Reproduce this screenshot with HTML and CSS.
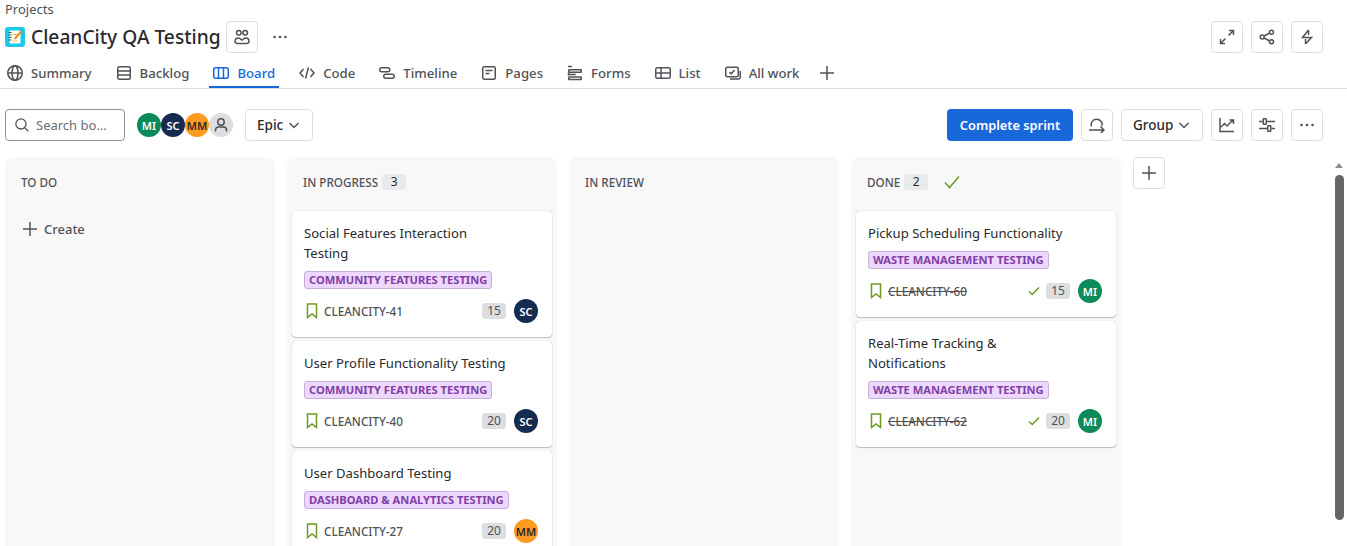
FILE: index.html
```html
<!DOCTYPE html>
<html lang="en">
<head>
    <meta charset="UTF-8">
    <meta name="viewport" content="width=device-width, initial-scale=1.0">
    <title>CleanCity QA Testing - Board</title>
    <link rel="stylesheet" href="styles.css">
</head>
<body>
    <header class="head">
        <div class="crumb">Projects</div>
        <div class="title-row">
            <svg class="logo" viewBox="0 0 20 20" width="20" height="20">
                <rect width="20" height="20" rx="3" fill="#1cc8e8"/>
                <rect x="4.5" y="3.5" width="11" height="13" rx="1" fill="#fdfdf6"/>
                <path d="M3.5 5.5h3M3.5 8h3M3.5 10.500h3M3.5 13h3" stroke="#555" stroke-width="1"/>
                <path d="M7.500 7.500h5M7.500 14h5" stroke="#f3c26a" stroke-width="1"/>
                <path d="M9 13l1-3 5.500-6.500 1.500 1.500-5.500 6.500z" fill="#f08a24"/>
            </svg>
            <h1>CleanCity QA Testing</h1>
            <button class="btn icon">
                <svg viewBox="0 0 16 16" width="16" height="16" class="ico"><circle cx="4.800" cy="3.800" r="2.300"/><circle cx="11.200" cy="3.800" r="2.300"/><path d="M1 12.500c0-2 1.300-3.500 3.300-3.500 2.500 0 2.500 2 3.700 2s1.500-2 3.700-2c2 0 3.300 1.500 3.300 3.500s-1.300 2-3 2H4c-1.700 0-3-.3-3-2z"/></svg>
            </button>
            <span class="dots">
                <svg viewBox="0 0 16 16" width="16" height="16"><circle cx="2.500" cy="8" r="1.300"/><circle cx="8" cy="8" r="1.300"/><circle cx="13.500" cy="8" r="1.300"/></svg>
            </span>
            <div class="head-actions">
                <button class="btn icon">
                    <svg viewBox="0 0 16 16" width="16" height="16" class="ico"><path d="M9.500 6.500L14.500 1.500M10 1.500h4.500V6M6.500 9.500L1.500 14.500M1.500 10v4.500H6"/></svg>
                </button>
                <button class="btn icon">
                    <svg viewBox="0 0 16 16" width="16" height="16" class="ico"><circle cx="3.200" cy="8" r="2"/><circle cx="12.500" cy="3.200" r="2"/><circle cx="12.500" cy="12.800" r="2"/><path d="M5 7l5.800-3M5 9l5.800 3"/></svg>
                </button>
                <button class="btn icon">
                    <svg viewBox="0 0 16 16" width="16" height="16" class="ico"><path d="M9.500 1L3.500 8.500h9L6.500 15M9.500 1v5M6.500 15v-5"/></svg>
                </button>
            </div>
        </div>
        <nav class="tabs">
            <a class="tab">
                <svg viewBox="0 0 16 16" width="16" height="16" class="ico"><circle cx="8" cy="8" r="7.250"/><ellipse cx="8" cy="8" rx="3" ry="7.250"/><path d="M1 8h14"/></svg>
                Summary
            </a>
            <a class="tab">
                <svg viewBox="0 0 16 16" width="16" height="16" class="ico"><rect x="1.750" y="1.750" width="12.500" height="12.500" rx="1.500"/><path d="M2 6h12M2 10h12"/></svg>
                Backlog
            </a>
            <a class="tab active">
                <svg viewBox="0 0 16 16" width="16" height="16" class="ico"><rect x="0.750" y="2.750" width="14.500" height="10.500" rx="2"/><path d="M5.500 3v10M10.500 3v10"/></svg>
                Board
            </a>
            <a class="tab">
                <svg viewBox="0 0 16 16" width="16" height="16" class="ico"><path d="M4.500 4L1 8l3.500 4M11.500 4L15 8l-3.500 4M9.500 2.500l-3 11"/></svg>
                Code
            </a>
            <a class="tab">
                <svg viewBox="0 0 16 16" width="16" height="16" class="ico"><rect x="0.750" y="2.750" width="10" height="4" rx="2"/><rect x="4.750" y="9.250" width="10.500" height="4" rx="2"/></svg>
                Timeline
            </a>
            <a class="tab">
                <svg viewBox="0 0 16 16" width="16" height="16" class="ico"><rect x="1.750" y="1.750" width="12.500" height="12.500" rx="1.500"/><path d="M4.500 5.500h7M4.500 8.500h4"/></svg>
                Pages
            </a>
            <a class="tab">
                <svg viewBox="0 0 16 16" width="16" height="16" class="ico"><path d="M1 1.500h4"/><rect x="1.750" y="4.750" width="12.500" height="2.500" rx=".5"/><path d="M1.500 7.500v3"/><rect x="1.750" y="12" width="12.500" height="2.500" rx=".5"/><path d="M1.750 9.500h7"/></svg>
                Forms
            </a>
            <a class="tab">
                <svg viewBox="0 0 16 16" width="16" height="16" class="ico"><rect x="0.750" y="2.750" width="14.500" height="10.500" rx="1.500"/><path d="M1 8h14M6 3v10"/></svg>
                List
            </a>
            <a class="tab">
                <svg viewBox="0 0 16 16" width="16" height="16" class="ico"><rect x="0.750" y="2.250" width="12.500" height="9.500" rx="1.500"/><path d="M4.500 7l1.800 1.800L9.500 5M15.250 6v6.500a1.500 1.500 0 0 1-1.500 1.500H5"/></svg>
                All work
            </a>
            <a class="tab plain">
                <svg viewBox="0 0 16 16" width="16" height="16" class="ico"><path d="M8 1v14M1 8h14"/></svg>
            </a>
        </nav>
    </header>

    <section class="toolbar">
        <label class="search">
            <svg viewBox="0 0 16 16" width="14" height="14" class="ico"><circle cx="6.800" cy="6.800" r="5.800"/><path d="M11 11l4.200 4.200"/></svg>
            <span>Search bo...</span>
        </label>
        <div class="people">
            <span class="avatar mi">MI</span>
            <span class="avatar sc">SC</span>
            <span class="avatar mm">MM</span>
            <span class="avatar none">
                <svg viewBox="0 0 16 16" width="16" height="16" class="ico"><circle cx="8" cy="5" r="3.200"/><path d="M2.500 14.500v-1.500a3 3 0 0 1 3-3h5a3 3 0 0 1 3 3v1.500"/></svg>
            </span>
        </div>
        <button class="btn text">Epic
            <svg viewBox="0 0 16 16" width="16" height="16" class="ico"><path d="M3.500 6l4.500 4.500L12.500 6"/></svg>
        </button>
        <div class="tool-actions">
            <button class="btn primary">Complete sprint</button>
            <button class="btn icon">
                <svg viewBox="0 0 16 16" width="16" height="16" class="ico"><path d="M2.500 9.500A5.500 5.500 0 1 1 13 9M0 13h15M11.500 9.500L15 13l-3.500 3.500"/></svg>
            </button>
            <button class="btn text group">Group
                <svg viewBox="0 0 16 16" width="16" height="16" class="ico"><path d="M3.500 6l4.500 4.500L12.500 6"/></svg>
            </button>
            <button class="btn icon">
                <svg viewBox="0 0 16 16" width="16" height="16" class="ico"><path d="M1 1v13.500h14M2 10l3.500-3.500 2.500 2.500 6-6M10.500 3h4v4"/></svg>
            </button>
            <button class="btn icon">
                <svg viewBox="0 0 16 16" width="16" height="16" class="ico"><path d="M0 4.500h3.500M8 4.500h8M0 11.500h8M12.500 11.500H16"/><rect x="4.250" y="1.750" width="3" height="5.500" rx=".5"/><rect x="8.750" y="8.750" width="3" height="5.500" rx=".5"/></svg>
            </button>
            <button class="btn icon">
                <svg viewBox="0 0 16 16" width="16" height="16" class="fill"><circle cx="2.500" cy="8" r="1.300"/><circle cx="8" cy="8" r="1.300"/><circle cx="13.500" cy="8" r="1.300"/></svg>
            </button>
        </div>
    </section>

    <main class="board">
        <section class="column">
            <div class="col-head"><span class="col-name">TO DO</span></div>
            <div class="create">
                <svg viewBox="0 0 16 16" width="16" height="16" class="ico"><path d="M8 1v14M1 8h14"/></svg>
                Create
            </div>
        </section>

        <section class="column">
            <div class="col-head"><span class="col-name">IN PROGRESS</span><span class="count">3</span></div>
            <div class="cards">
                <article class="card">
                    <h2>Social Features Interaction<br>Testing</h2>
                    <span class="tag">COMMUNITY FEATURES TESTING</span>
                    <div class="card-foot">
                        <svg viewBox="0 0 12 16" width="12" height="16" class="mark"><path d="M1.500 1h9v13.500L6 11 1.500 14.500z"/></svg>
                        <span class="key">CLEANCITY-41</span>
                        <span class="points">15</span>
                        <span class="avatar sc">SC</span>
                    </div>
                </article>
                <article class="card">
                    <h2>User Profile Functionality Testing</h2>
                    <span class="tag">COMMUNITY FEATURES TESTING</span>
                    <div class="card-foot">
                        <svg viewBox="0 0 12 16" width="12" height="16" class="mark"><path d="M1.500 1h9v13.500L6 11 1.500 14.500z"/></svg>
                        <span class="key">CLEANCITY-40</span>
                        <span class="points">20</span>
                        <span class="avatar sc">SC</span>
                    </div>
                </article>
                <article class="card">
                    <h2>User Dashboard Testing</h2>
                    <span class="tag">DASHBOARD &amp; ANALYTICS TESTING</span>
                    <div class="card-foot">
                        <svg viewBox="0 0 12 16" width="12" height="16" class="mark"><path d="M1.500 1h9v13.500L6 11 1.500 14.500z"/></svg>
                        <span class="key">CLEANCITY-27</span>
                        <span class="points">20</span>
                        <span class="avatar mm">MM</span>
                    </div>
                </article>
            </div>
        </section>

        <section class="column">
            <div class="col-head"><span class="col-name">IN REVIEW</span></div>
        </section>

        <section class="column">
            <div class="col-head">
                <span class="col-name">DONE</span><span class="count">2</span>
                <svg viewBox="0 0 16 16" width="16" height="16" class="done-check"><path d="M1 8.500l4.500 5L15 2.500"/></svg>
            </div>
            <div class="cards">
                <article class="card">
                    <h2>Pickup Scheduling Functionality</h2>
                    <span class="tag">WASTE MANAGEMENT TESTING</span>
                    <div class="card-foot">
                        <svg viewBox="0 0 12 16" width="12" height="16" class="mark"><path d="M1.500 1h9v13.500L6 11 1.500 14.500z"/></svg>
                        <span class="key struck">CLEANCITY-60</span>
                        <svg viewBox="0 0 12 12" width="12" height="12" class="small-check"><path d="M1 6.500l3.300 3L11 2.500"/></svg>
                        <span class="points">15</span>
                        <span class="avatar mi">MI</span>
                    </div>
                </article>
                <article class="card">
                    <h2>Real-Time Tracking &amp;<br>Notifications</h2>
                    <span class="tag">WASTE MANAGEMENT TESTING</span>
                    <div class="card-foot">
                        <svg viewBox="0 0 12 16" width="12" height="16" class="mark"><path d="M1.500 1h9v13.500L6 11 1.500 14.500z"/></svg>
                        <span class="key struck">CLEANCITY-62</span>
                        <svg viewBox="0 0 12 12" width="12" height="12" class="small-check"><path d="M1 6.500l3.300 3L11 2.500"/></svg>
                        <span class="points">20</span>
                        <span class="avatar mi">MI</span>
                    </div>
                </article>
            </div>
        </section>

        <button class="btn icon add-col">
            <svg viewBox="0 0 16 16" width="16" height="16" class="ico"><path d="M8 1v14M1 8h14"/></svg>
        </button>

        <div class="scroll">
            <span class="scroll-up"></span>
            <span class="scroll-thumb"></span>
        </div>
    </main>
</body>
</html>
```

FILE: styles.css
```css
* {
    box-sizing: border-box;
}

html, body {
    height: 100%;
}

body {
    margin: 0;
    display: flex;
    flex-direction: column;
    overflow: hidden;
    background-color: #fff;
    color: #292a2e;
    font-family: "Noto Sans", "Open Sans", Arial, sans-serif;
    font-size: 13px;
}

svg {
    display: block;
    flex: none;
}

.ico {
    fill: none;
    stroke: #505258;
    stroke-width: 1.5;
}

.fill {
    fill: #505258;
}

/* header */
.head {
    height: 89px;
    border-bottom: 1px solid #dddee1;
    flex: none;
}

.crumb {
    height: 21px;
    padding: 1px 0 0 5px;
    color: #505258;
    font-size: 13px;
    line-height: 17px;
}

.title-row {
    display: flex;
    align-items: center;
    height: 32px;
    padding: 0 24px 0 5px;
}

.logo {
    margin-right: 6px;
}

h1 {
    width: 195px;
    margin: 0;
    font-size: 19.2px;
    font-weight: 500;
    line-height: 34px;
}

.dots {
    margin-left: 14px;
    fill: #505258;
}

.head-actions {
    display: flex;
    gap: 8px;
    margin-left: auto;
}

.btn {
    display: flex;
    align-items: center;
    justify-content: center;
    height: 32px;
    padding: 0;
    border: 1px solid #dddee1;
    border-radius: 4px;
    background-color: #fff;
    color: #292a2e;
    font-family: inherit;
    font-size: 13px;
    font-weight: 500;
    flex: none;
}

.btn.icon {
    width: 32px;
}

.btn.text {
    justify-content: flex-start;
    gap: 3px;
    width: 68px;
    padding-left: 11px;
    font-size: 13.5px;
}

.btn.group {
    width: 82px;
}

.btn.primary {
    width: 126px;
    border: none;
    background-color: #1868db;
    color: #fff;
    font-size: 12.8px;
    font-weight: 600;
}

/* tabs */
.tabs {
    display: flex;
    gap: 16px;
    height: 35px;
    padding-left: 3px;
}

.tab {
    display: flex;
    align-items: center;
    gap: 8px;
    height: 35px;
    padding: 7px 4px 0;
    border-bottom: 2px solid transparent;
    color: #505258;
    font-size: 13.2px;
    font-weight: 500;
}

.tab.plain {
    padding: 7px 0 0;
}

.tab.active {
    border-bottom-color: #1868db;
    color: #1868db;
}

.tab.active .ico {
    stroke: #1868db;
}

/* toolbar */
.toolbar {
    display: flex;
    align-items: center;
    height: 32px;
    margin: 20px 24px 16px 5px;
    flex: none;
}

.search {
    display: flex;
    align-items: center;
    gap: 7px;
    width: 120px;
    height: 32px;
    padding-left: 9px;
    border: 1px solid #8c8f97;
    border-radius: 4px;
    color: #6b6e76;
    font-size: 13px;
}

.people {
    display: flex;
    gap: 0;
    margin: 0 12px;
}

.avatar {
    display: flex;
    align-items: center;
    justify-content: center;
    width: 24px;
    height: 24px;
    border-radius: 50%;
    color: #fff;
    font-size: 11px;
    font-weight: 600;
    flex: none;
}

.mi {
    background-color: #0c8a5a;
}

.sc {
    background-color: #162b50;
}

.mm {
    background-color: #ff991f;
    color: #292a2e;
}

.none {
    background-color: #dddee1;
}

.tool-actions {
    display: flex;
    gap: 8px;
    margin-left: auto;
}

/* board */
.board {
    display: flex;
    gap: 12px;
    flex: 1;
    min-height: 0;
    padding-left: 5px;
}

.column {
    width: 270px;
    border-radius: 8px 8px 0 0;
    background-color: #f8f8f8;
    flex: none;
}

.col-head {
    display: flex;
    align-items: center;
    height: 54px;
    padding: 0 0 5px 16px;
}

.col-name {
    color: #505258;
    font-size: 11.7px;
    font-weight: 500;
}

.count {
    width: 24px;
    height: 16px;
    margin-left: 4px;
    border-radius: 3px;
    background-color: #e9eaec;
    color: #292a2e;
    font-size: 12px;
    line-height: 16px;
    text-align: center;
}

.done-check {
    margin-left: 16px;
    fill: none;
    stroke: #6a9a23;
    stroke-width: 1.5;
}

.create {
    display: flex;
    align-items: center;
    gap: 6px;
    padding: 9px 0 0 17px;
    color: #505258;
    font-size: 13px;
    font-weight: 500;
}

.cards {
    display: flex;
    flex-direction: column;
    gap: 4px;
    padding: 0 5px;
}

.card {
    padding: 12px 14px 14px 12px;
    border-radius: 4px;
    background-color: #fff;
    box-shadow: 0 1px 1px rgba(30, 31, 33, .25), 0 0 1px rgba(30, 31, 33, .31);
}

h2 {
    margin: 0 0 8px;
    font-size: 13.1px;
    font-weight: 400;
    line-height: 20px;
}

.tag {
    display: block;
    width: fit-content;
    height: 18px;
    padding: 0 4px;
    border: 1px solid #c5aed8;
    border-radius: 3px;
    background-color: #eed7fc;
    color: #803fa5;
    font-size: 11.15px;
    font-weight: 700;
    line-height: 16px;
}

.card-foot {
    display: flex;
    align-items: center;
    height: 24px;
    margin-top: 10px;
}

.mark {
    fill: none;
    stroke: #6a9a23;
    stroke-width: 1.5;
    margin: 0 6px 0 2px;
}

.key {
    margin-right: auto;
    color: #505258;
    font-size: 11.7px;
    font-weight: 500;
}

.key.struck {
    text-decoration: line-through;
}

.small-check {
    margin-right: 6px;
    fill: none;
    stroke: #6a9a23;
    stroke-width: 1.5;
}

.points {
    width: 24px;
    height: 16px;
    margin-right: 8px;
    border-radius: 3px;
    background-color: #dddee1;
    color: #505258;
    font-size: 12px;
    line-height: 16px;
    text-align: center;
}

.scroll {
    display: flex;
    flex-direction: column;
    align-items: center;
    gap: 7px;
    width: 10px;
    margin: 6px 3px 0 auto;
}

.scroll-up {
    width: 0;
    height: 0;
    border-left: 4px solid transparent;
    border-right: 4px solid transparent;
    border-bottom: 5px solid #8c8c8c;
}

.scroll-thumb {
    width: 9px;
    height: 345px;
    border-radius: 5px;
    background-color: #666;
}
```
